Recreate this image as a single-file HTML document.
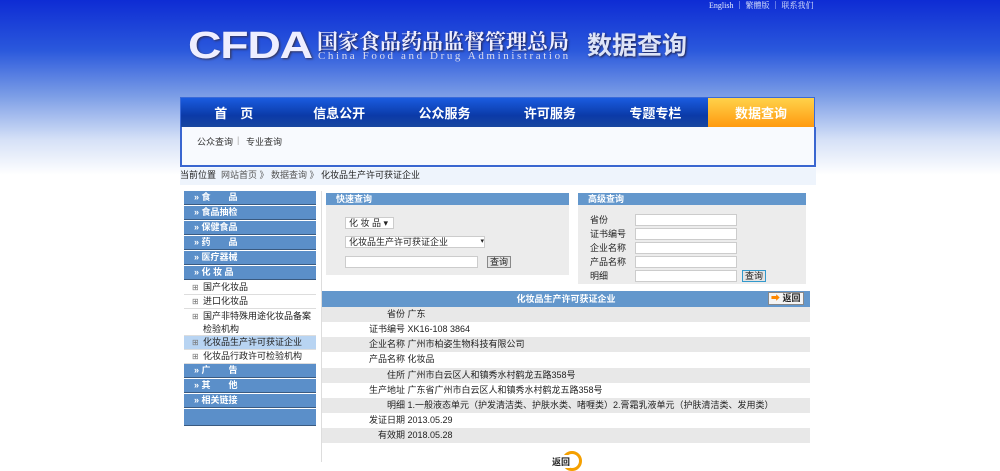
<!DOCTYPE html>
<html><head><meta charset="utf-8"><style>
*{margin:0;padding:0;box-sizing:border-box}
html,body{background:#fff}
body{width:1000px;height:462px;overflow:hidden;position:relative;font-family:"Liberation Sans","Noto Sans CJK SC",sans-serif;font-size:9px;color:#222}
.bg{position:absolute;left:0;top:0;width:1000px;height:180px;background:linear-gradient(to bottom,#0e2cd4 0px,#2a58dc 50px,#7a9ce6 95px,#d6e1f7 140px,#fff 175px)}
.abs{position:absolute}
.toplinks{left:709px;top:0;color:#e8eeff;font-family:"Liberation Serif","Noto Serif CJK SC",serif;font-size:8px;white-space:nowrap}
.logo{left:188px;top:25px;font:900 38px "Liberation Sans",sans-serif;color:#eef;letter-spacing:-1px;transform:scaleX(1.22);transform-origin:left;text-shadow:1px 1px 2px #335}
.cn{left:317px;top:26px;font:bold 21px "Noto Serif CJK SC",serif;color:#eef;text-shadow:1px 1px 2px #224;white-space:nowrap}
.en{left:318px;top:50px;font:11px "Liberation Serif",serif;color:#dde;letter-spacing:2.6px;white-space:nowrap}
.sj{left:587px;top:26px;font:bold 25px "Noto Sans CJK SC",sans-serif;color:#dde4f8;text-shadow:1px 1px 2px #224}
.nav{left:180px;top:97px;width:635px;height:31px;background:linear-gradient(#1a5ce0,#0b3aa8 60%,#1846a0);border:1px solid #3a6ad8;display:flex}
.nav div{flex:1;text-align:center;color:#fff;font:bold 13px "Noto Sans CJK SC",sans-serif;line-height:29px}
.nav .on{background:linear-gradient(#ffd24a,#ff9a10);color:#fff;flex:0 0 106px}
.sub{left:180px;top:127px;width:636px;height:40px;border:2px solid #3a66d0;border-top:none;background:#f8fafe}
.sub span{position:absolute;top:8px;font-size:9px;color:#333}
.bc{left:180px;top:168px;width:636px;height:17px;background:#eef4fc;line-height:15px;font-size:9px}
.side{left:184px;top:191px;width:132px}
.b{height:14px;margin-bottom:1px;background:#5b8fc9;border-bottom:1px solid #3a5a80;color:#fff;font-weight:bold;font-size:9px;line-height:13px;padding-left:10px}
.w{background:#fff;height:14px;font-size:9px;line-height:13px;padding-left:19px;position:relative;border-bottom:1px solid #ddd}
.w:before{content:"⊞";position:absolute;left:8px;color:#777;font-size:8px}
.main{left:321px;top:191px;width:491px;height:271px;border-left:1px solid #ddd;background:#fff}
.pan{background:#ececec}
.ph{background:#6397cc;color:#fff;font-weight:bold;height:12px;line-height:12px;padding-left:10px;font-size:9px}
.inp{position:absolute;background:#fff;border:1px solid #ccc;height:12px}
.btn{position:absolute;background:#e4e4e4;border:1px solid #888;font-size:9px;line-height:10px;padding:0 2px;height:12px}
.rt{left:322px;top:291px;width:488px;height:16px;background:#6397cc;color:#fff;font-weight:bold;text-align:center;line-height:16px}
.row{position:absolute;left:322px;width:488px;height:15px;line-height:15px;font-size:9px}
.row .l{display:inline-block;width:83px;text-align:right}
.g{background:#e8e8e8}
</style></head><body>
<div class="bg"></div>
<div class="abs toplinks">English ｜ 繁體版 ｜ 联系我们</div>
<div class="abs logo">CFDA</div>
<div class="abs cn">国家食品药品监督管理总局</div>
<div class="abs en">China Food and Drug Administration</div>
<div class="abs sj">数据查询</div>
<div class="abs nav"><div>首　页</div><div>信息公开</div><div>公众服务</div><div>许可服务</div><div>专题专栏</div><div class="on">数据查询</div></div>
<div class="abs sub"><span style="left:15px">公众查询</span><span style="left:55px;color:#aaa">|</span><span style="left:64px">专业查询</span></div>
<div class="abs bc">当前位置&nbsp; <span style="color:#555">网站首页 》 数据查询 》</span> 化妆品生产许可获证企业</div>
<div class="abs side">
<div class="b">» 食　　品</div><div class="b">» 食品抽检</div><div class="b">» 保健食品</div><div class="b">» 药　　品</div><div class="b">» 医疗器械</div><div class="b">» 化 妆 品</div>
<div class="w">国产化妆品</div><div class="w">进口化妆品</div>
<div class="w" style="height:27px;line-height:13px;padding-top:1px">国产非特殊用途化妆品备案检验机构</div>
<div class="w" style="background:#b8d4f2">化妆品生产许可获证企业</div>
<div class="w">化妆品行政许可检验机构</div>
<div class="b">» 广　　告</div><div class="b">» 其　　他</div><div class="b">» 相关链接</div>
<div class="b" style="height:17px"></div>
</div>
<div class="abs main"></div>
<div class="abs pan" style="left:326px;top:193px;width:243px;height:82px"><div class="ph">快速查询</div></div>
<div class="inp" style="left:345px;top:217px;width:49px;font-size:9px;line-height:10px;padding-left:3px">化 妆 品 ▾</div>
<div class="inp" style="left:345px;top:236px;width:140px;font-size:9px;line-height:10px;padding-left:3px">化妆品生产许可获证企业<span style="float:right;font-size:7px">▾</span></div>
<div class="inp" style="left:345px;top:256px;width:133px"></div>
<div class="btn" style="left:487px;top:256px">查询</div>
<div class="abs pan" style="left:578px;top:193px;width:228px;height:91px"><div class="ph">高级查询</div></div>
<div class="abs" style="left:590px;top:213px;line-height:14px;font-size:9px">省份<br>证书编号<br>企业名称<br>产品名称<br>明细</div>
<div class="inp" style="left:635px;top:214px;width:102px"></div>
<div class="inp" style="left:635px;top:228px;width:102px"></div>
<div class="inp" style="left:635px;top:242px;width:102px"></div>
<div class="inp" style="left:635px;top:256px;width:102px"></div>
<div class="inp" style="left:635px;top:270px;width:102px"></div>
<div class="btn" style="left:742px;top:270px;border-color:#39c">查询</div>
<div class="abs rt">化妆品生产许可获证企业</div>
<div class="btn" style="left:768px;top:292px;height:13px;background:#f4f4f4;font-weight:bold"><span style="color:#f80">➡</span> 返回</div>
<div class="row g" style="top:307px"><span class="l">省份</span> 广东</div>
<div class="row" style="top:322px"><span class="l">证书编号</span> XK16-108 3864</div>
<div class="row g" style="top:337px"><span class="l">企业名称</span> 广州市柏姿生物科技有限公司</div>
<div class="row" style="top:352px"><span class="l">产品名称</span> 化妆品</div>
<div class="row g" style="top:368px"><span class="l">住所</span> 广州市白云区人和镇秀水村鹤龙五路358号</div>
<div class="row" style="top:383px"><span class="l">生产地址</span> 广东省广州市白云区人和镇秀水村鹤龙五路358号</div>
<div class="row g" style="top:398px"><span class="l">明细</span> 1.一般液态单元（护发清洁类、护肤水类、啫喱类）2.膏霜乳液单元（护肤清洁类、发用类）</div>
<div class="row" style="top:413px"><span class="l">发证日期</span> 2013.05.29</div>
<div class="row g" style="top:428px"><span class="l">有效期</span> 2018.05.28</div>
<div class="abs" style="left:562px;top:451px;width:20px;height:20px;border-radius:50%;border:3px solid #f5a000"></div>
<div class="abs" style="left:552px;top:455px;font-weight:bold;font-size:9px;background:#fff">返回</div>
</body></html>
